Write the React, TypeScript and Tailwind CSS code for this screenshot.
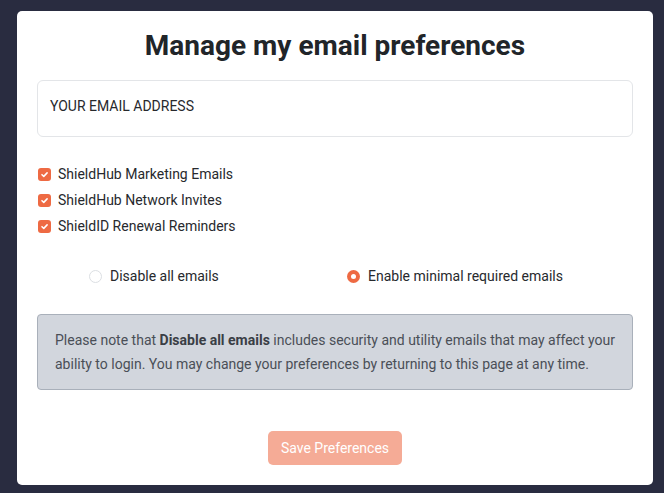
import React from "react";

function CheckBox() {
  return (
    <span className="flex h-[13px] w-[13px] items-center justify-center rounded-[3px] bg-[#ee6a43]">
      <svg width="9" height="9" viewBox="0 0 10 10" fill="none">
        <path d="M2.2 5.2 L4.2 7.1 L7.9 3.2" stroke="white" strokeWidth="1.7" strokeLinecap="round" strokeLinejoin="round" />
      </svg>
    </span>
  );
}

export default function App() {
  const items = ["ShieldHub Marketing Emails", "ShieldHub Network Invites", "ShieldID Renewal Reminders"];
  return (
    <div className="min-h-screen bg-[#292c40] pl-[17px] pt-[11px]" style={{ fontFamily: "Roboto, 'Liberation Sans', sans-serif" }}>
      <div className="flex h-[474px] w-[636px] flex-col rounded-[5px] bg-white px-[20px] pt-[18px]">
        <h1 className="text-center text-[28px] font-bold leading-[34px] text-[#212529]">Manage my email preferences</h1>
        <div className="mt-[17px] flex h-[57px] items-center rounded-[6px] border border-[#e3e5e8] px-[12px] pb-[4px] text-[14px] text-[#27292d]">
          YOUR EMAIL ADDRESS
        </div>
        <div className="mt-[24px] flex flex-col">
          {items.map((t) => (
            <div key={t} className="flex h-[26px] items-center gap-[7px] pl-[1px] text-[14px] text-[#27292d]">
              <CheckBox />
              <span>{t}</span>
            </div>
          ))}
        </div>
        <div className="mt-[24px] flex h-[26px] items-center pl-[52px] text-[14px] text-[#27292d]">
          <div className="flex w-[258px] items-center gap-[8px]">
            <span className="h-[13px] w-[13px] rounded-full border border-[#dcdfe3] bg-white" />
            <span>Disable all emails</span>
          </div>
          <div className="flex items-center gap-[8px]">
            <span className="flex h-[13px] w-[13px] items-center justify-center rounded-full bg-[#ee6a43]">
              <span className="h-[5px] w-[5px] rounded-full bg-white" />
            </span>
            <span>Enable minimal required emails</span>
          </div>
        </div>
        <div className="mt-[25px] rounded-[4px] border border-[#a9b0ba] bg-[#d2d6dd] px-[17px] py-[13px] text-[14px] leading-[24px] text-[#4a4f57]">
          Please note that <b className="font-bold text-[#3a3e45]">Disable all emails</b> includes security and utility emails that may affect your ability to login. You may change your preferences by returning to this page at any time.
        </div>
        <div className="mt-[41px] flex justify-center">
          <button className="h-[34px] w-[134px] rounded-[5px] bg-[#f5ab96] text-[14px] text-white">Save Preferences</button>
        </div>
      </div>
    </div>
  );
}
